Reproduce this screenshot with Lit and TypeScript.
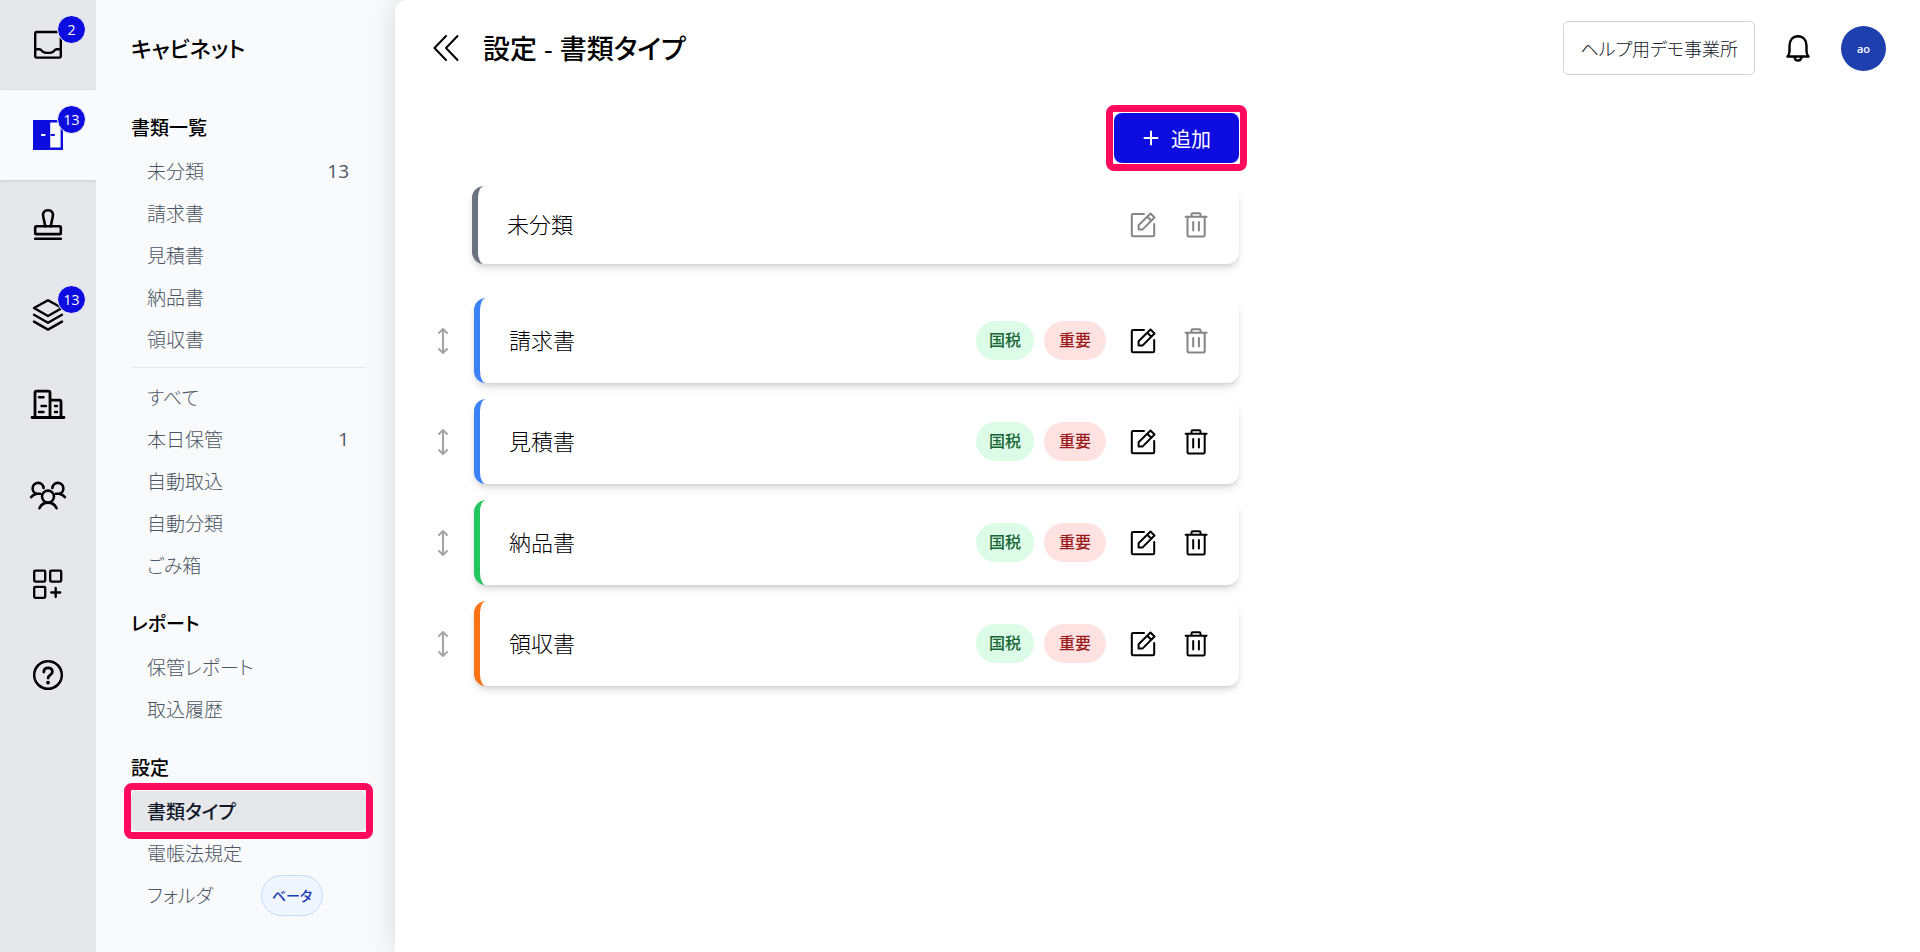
import { LitElement, html, css, svg } from "lit";
import { customElement, property, state } from "lit/decorators.js";
import { classMap } from "lit/directives/class-map.js";

const shapes: Record<string, unknown> = {
  inbox: svg`<g stroke-width="2.4"><rect x="6.2" y="6" width="25.600" height="25.600" rx="1.500"/><path d="M6.200 23.200h4c1.300 0 1.900.5 2.800 1.700 1.200 1.500 2.600 2 6 2s4.800-.5 6-2c.9-1.200 1.500-1.700 2.800-1.700h4"/></g>`,
  cabinet: svg`<rect x="4" y="4" width="16" height="30" fill="currentColor" stroke="none"/><path d="M20 5.200h12.800v27.600H20z" stroke-width="2.400" stroke-linejoin="miter"/><path d="M13 19h2.500" stroke="#fff" stroke-width="2.200"/><path d="M22.500 19h2.500" stroke-width="2.200"/>`,
  stamp: svg`<g stroke-width="2.600"><path d="M16.300 20.300 14.300 11C13.200 6.800 15.300 4.200 19 4.200s5.800 2.600 4.700 6.800l-2 9.300"/><rect x="6.200" y="20.300" width="25.600" height="7.800" rx="1.200"/><path d="M6.200 32.700h25.600"/></g>`,
  layers: svg`<g stroke-width="2.400"><path d="M19 4.200 33 12l-14 8L5 12z"/><path d="m5 18.800 14 8 14-8M5 25.600l14 8 14-8"/></g>`,
  office: svg`<g stroke-width="2.800"><path d="M6 31.500V6.700C6 5.600 6.500 5.100 7.600 5.100h11.800c1.100 0 1.600.5 1.600 1.600v24.800M21 14.200h9.400c1.100 0 1.600.5 1.600 1.600v15.700M3 31.500h32"/><path d="M10 11.200h4.500M12.500 20h4.500M10 26h4.500M26 20h2M26 26h2" stroke-width="2.400"/></g>`,
  people: svg`<g stroke-width="2.600"><circle cx="19" cy="20.600" r="6"/><path d="M10.400 32.200c1.600-3.400 4.600-5.600 8.600-5.600s7 2.200 8.600 5.600M14.600 12A5.500 5.500 0 1 0 8 17.800h3.200M8 17.800c-2.600.4-4.500 1.600-5.900 3.300M23.400 12A5.500 5.500 0 1 1 30 17.800h-3.200M30 17.800c2.600.4 4.500 1.600 5.900 3.300"/></g>`,
  apps: svg`<g stroke-width="2.300"><rect x="5.200" y="4.600" width="11" height="11" rx="1"/><rect x="21.200" y="4.600" width="11" height="11" rx="1"/><rect x="5.200" y="20.800" width="11" height="11" rx="1"/><path d="M26.700 22v9M22.200 26.500h9"/></g>`,
  help: svg`<circle cx="19" cy="19" r="13.800" stroke-width="2.500"/><path d="M14.800 16c0-2.600 1.800-4.200 4.300-4.200s4.300 1.600 4.300 3.900c0 3-4.300 3.300-4.300 6.300" stroke-width="2.800"/><circle cx="19" cy="26.600" r="1.900" fill="currentColor" stroke="none"/>`,
  collapse: svg`<path d="M19 7 7.500 19 19 31M30.500 7 19 19l11.500 12" stroke-width="2"/>`,
  bell: svg`<g stroke-width="2.400"><path d="M8.500 27.500c1.300-1.500 2-3 2-5.500v-5.500c0-5.500 3.500-9.300 8.500-9.300s8.500 3.800 8.500 9.300V22c0 2.500.7 4 2 5.500z"/><path d="M15.500 28c.3 2.300 1.600 3.600 3.500 3.600s3.200-1.300 3.500-3.600"/></g>`,
  plus: svg`<path d="M19 12.500v13M12.500 19h13" stroke-width="2"/>`,
  edit: svg`<g stroke-width="2"><path d="M20 8H9c-.8 0-1.200.4-1.200 1.200V29c0 .8.4 1.200 1.200 1.200h20c.8 0 1.200-.4 1.200-1.200V18"/><path d="M14.600 23.400v-4.200L26.500 7.500l4 4-11.800 11.900zM23.300 10.800l4 4"/></g>`,
  trash: svg`<g stroke-width="2"><path d="M8.600 10.800h21M10.500 10.800v18.400c0 .8.400 1.200 1.200 1.200h14.800c.8 0 1.200-.4 1.200-1.200V10.800M14.500 10.800V8.500c0-.8.500-1.300 1.300-1.300h6.400c.8 0 1.300.5 1.300 1.300v2.300M16.200 16v8.500M21.900 16v8.500"/></g>`,
  drag: svg`<path d="M19 7v24M15 11l4-4 4 4M15 27l4 4 4-4" stroke-width="2"/>`,
};

const icon = (name: string) => html`<svg class="icon" viewBox="0 0 38 38" width="38" height="38" fill="none"
  stroke="currentColor" stroke-linecap="round" stroke-linejoin="round" aria-hidden="true">${shapes[name]}</svg>`;

const reset = css`
  * { box-sizing: border-box; }
  button { font: inherit; color: inherit; margin: 0; padding: 0; border: 0; background: none; cursor: pointer; }
  a { color: inherit; text-decoration: none; }
  h1, h2, ul { margin: 0; padding: 0; font-weight: inherit; list-style: none; }
  .icon { display: block; flex: none; }
`;

@customElement("icon-rail")
export class IconRail extends LitElement {
  static styles = [reset, css`
    :host { display: block; background: #e5e7eb; }
    .list { display: flex; flex-direction: column; }
    .link { display: flex; height: 90px; align-items: center; justify-content: center; color: #000; }
    .active { background: #f9fafb; color: #0d0ddf; box-shadow: 0 1px 3px rgb(0 0 0 / 12%); }
    .mark { position: relative; }
    .badge {
      position: absolute; top: -11px; right: -19px; width: 29px; height: 29px;
      border: 1px solid #fff; border-radius: 50%; background: #0d0ddf; color: #fff;
      font-size: 14px; line-height: 28px; text-align: center;
    }
  `];

  private items = [
    { icon: "inbox", label: "受信箱", count: 2 },
    { icon: "cabinet", label: "キャビネット", count: 13, active: true },
    { icon: "stamp", label: "承認" },
    { icon: "layers", label: "仕訳", count: 13 },
    { icon: "office", label: "事業所" },
    { icon: "people", label: "メンバー" },
    { icon: "apps", label: "アプリ" },
    { icon: "help", label: "ヘルプ" },
  ];

  render() {
    return html`<ul class="list">${this.items.map((i) => html`
      <li><a href="#" aria-label=${i.label} class=${classMap({ link: true, active: !!i.active })}>
        <span class="mark">${icon(i.icon)}${i.count ? html`<span class="badge">${i.count}</span>` : ""}</span>
      </a></li>`)}</ul>`;
  }
}

interface NavItem { label: string; count?: number; beta?: boolean; active?: boolean; }

@customElement("side-nav")
export class SideNav extends LitElement {
  static styles = [reset, css`
    :host { display: block; padding: 0 29px 0 35px; background: #f9fafb; color: #4b5563; }
    .title {
      height: 96px; display: flex; align-items: center; padding-bottom: 2px;
      color: #000; font-size: 22px; font-weight: 500;
    }
    .sections { display: flex; flex-direction: column; gap: 25px; padding-top: 18px; }
    .heading { margin-bottom: 9px; line-height: 28px; color: #000; font-size: 19px; font-weight: 500; }
    .group { display: flex; flex-direction: column; gap: 2px; }
    .group + .group { margin-top: 8px; padding-top: 9px; border-top: 1px solid #e5e7eb; }
    .item {
      position: relative; display: flex; height: 40px; align-items: center; justify-content: space-between;
      padding: 0 17px 0 16px; border-radius: 5px; font-size: 19px; font-weight: 300;
    }
    .active { background: #e5e7eb; color: #111827; font-weight: 500; }
    .active::after {
      content: ""; position: absolute; inset: -8px -7px; border: 7px solid #ff0a5c; border-radius: 8px;
    }
    .count { font-weight: 400; }
    .beta {
      width: 62px; margin-right: 26px; border: 1px solid #bfdbfe; border-radius: 21px; text-align: center;
      background: #eff6ff; color: #1e40af; font-size: 14px; line-height: 39px; font-weight: 500;
    }
  `];

  private sections: { title: string; groups: NavItem[][] }[] = [
    { title: "書類一覧", groups: [
      [{ label: "未分類", count: 13 }, { label: "請求書" }, { label: "見積書" }, { label: "納品書" }, { label: "領収書" }],
      [{ label: "すべて" }, { label: "本日保管", count: 1 }, { label: "自動取込" }, { label: "自動分類" }, { label: "ごみ箱" }],
    ] },
    { title: "レポート", groups: [[{ label: "保管レポート" }, { label: "取込履歴" }]] },
    { title: "設定", groups: [[{ label: "書類タイプ", active: true }, { label: "電帳法規定" }, { label: "フォルダ", beta: true }]] },
  ];

  render() {
    return html`
      <h2 class="title">キャビネット</h2>
      <div class="sections">${this.sections.map((s) => html`
        <section>
          <h2 class="heading">${s.title}</h2>
          ${s.groups.map((g) => html`<ul class="group">${g.map((i) => html`
            <li><a href="#" class=${classMap({ item: true, active: !!i.active })}>
              <span>${i.label}</span>
              ${i.count ? html`<span class="count">${i.count}</span>` : ""}
              ${i.beta ? html`<span class="beta">ベータ</span>` : ""}
            </a></li>`)}</ul>`)}
        </section>`)}
      </div>`;
  }
}

@customElement("type-card")
export class TypeCard extends LitElement {
  static styles = [reset, css`
    :host { display: block; }
    .card {
      display: flex; align-items: center; height: 85px; padding: 0 24px 0 29px;
      border-left: 6px solid; border-radius: 12px; background: #fff;
      box-shadow: 0 5px 8px -1px rgb(0 0 0 / 12%), 0 3px 5px -2px rgb(0 0 0 / 12%);
    }
    .compact { height: 78px; }
    .gray { border-color: #6b7280; }
    .blue { border-color: #3b82f6; }
    .green { border-color: #22c55e; }
    .orange { border-color: #f97316; }
    .name { flex: 1; padding-bottom: 4px; color: #000; font-size: 22px; font-weight: 300; }
    .tag { height: 39px; border-radius: 20px; font-size: 16px; line-height: 39px; font-weight: 500; }
    .tax { margin-right: 10px; padding: 0 13px; background: #dcfce7; color: #166534; }
    .key { margin-right: 18px; padding: 0 15px; background: #fee2e2; color: #991b1b; }
    .action { margin-left: 15px; color: #000; }
    .action:first-of-type { margin-left: 0; }
    .action:disabled { color: #858585; cursor: default; }
  `];

  @property() name = "";
  @property() color = "gray";
  @property({ type: Boolean }) tagged = false;
  @property({ type: Boolean }) editable = false;
  @property({ type: Boolean }) removable = false;

  render() {
    return html`<div class=${classMap({ card: true, compact: !this.tagged, [this.color]: true })}>
      <span class="name">${this.name}</span>
      ${this.tagged ? html`<span class="tag tax">国税</span><span class="tag key">重要</span>` : ""}
      <button class="action" aria-label="編集" ?disabled=${!this.editable}>${icon("edit")}</button>
      <button class="action" aria-label="削除" ?disabled=${!this.removable}>${icon("trash")}</button>
    </div>`;
  }
}

@customElement("app-root")
export class AppRoot extends LitElement {
  static styles = [reset, css`
    :host {
      display: grid; grid-template-columns: 96px 299px minmax(0, 1fr); min-height: 100vh;
      background: #f9fafb; font-family: "Open Sans", "Noto Sans CJK JP", sans-serif;
      font-feature-settings: "palt"; color: #000;
    }
    .main { border-radius: 12px 0 0 0; background: #fff; box-shadow: 0 0 28px rgb(0 0 0 / 14%); }
    .top { display: flex; height: 96px; align-items: center; padding: 0 34px 0 32px; }
    .title { flex: 1; margin-left: 18px; padding-bottom: 2px; font-size: 27px; font-weight: 500; }
    .company {
      height: 54px; padding: 0 16px; border: 1px solid #d1d5db; border-radius: 5px;
      color: #111827; font-size: 18px; font-weight: 300;
    }
    .bell { margin: 0 24px; }
    .avatar {
      width: 45px; height: 45px; border-radius: 50%; background: #1e40af; color: #fff;
      font-size: 11px; font-weight: 600;
    }
    .content { max-width: 844px; padding: 17px 0 40px 29px; }
    .bar { display: flex; justify-content: flex-end; }
    .add {
      position: relative; display: flex; height: 50px; align-items: center; gap: 1px;
      padding: 0 28px 0 18px; border-radius: 8px; background: #0d0ddf; color: #fff;
      font-size: 20px; font-weight: 400;
    }
    .add::after {
      content: ""; position: absolute; inset: -8px; border: 7px solid #ff0a5c; border-radius: 8px;
    }
    .fixed { margin: 23px 0 34px 48px; }
    .rows { display: flex; flex-direction: column; gap: 16px; }
    .row { display: grid; grid-template-columns: 38px minmax(0, 1fr); gap: 12px; align-items: center; }
    .handle { color: #a3a3a3; cursor: grab; }
  `];

  @state() private types = [
    { name: "請求書", color: "blue", removable: false },
    { name: "見積書", color: "blue", removable: true },
    { name: "納品書", color: "green", removable: true },
    { name: "領収書", color: "orange", removable: true },
  ];

  render() {
    return html`
      <icon-rail></icon-rail>
      <side-nav></side-nav>
      <main class="main">
        <header class="top">
          <button aria-label="戻る">${icon("collapse")}</button>
          <h1 class="title">設定 - 書類タイプ</h1>
          <button class="company">ヘルプ用デモ事業所</button>
          <button class="bell" aria-label="通知">${icon("bell")}</button>
          <button class="avatar">ao</button>
        </header>
        <div class="content">
          <div class="bar"><button class="add">${icon("plus")}<span>追加</span></button></div>
          <type-card class="fixed" name="未分類"></type-card>
          <ul class="rows">${this.types.map((t) => html`
            <li class="row">
              <button class="handle" aria-label="並べ替え">${icon("drag")}</button>
              <type-card name=${t.name} color=${t.color} tagged editable ?removable=${t.removable}></type-card>
            </li>`)}</ul>
        </div>
      </main>`;
  }
}
